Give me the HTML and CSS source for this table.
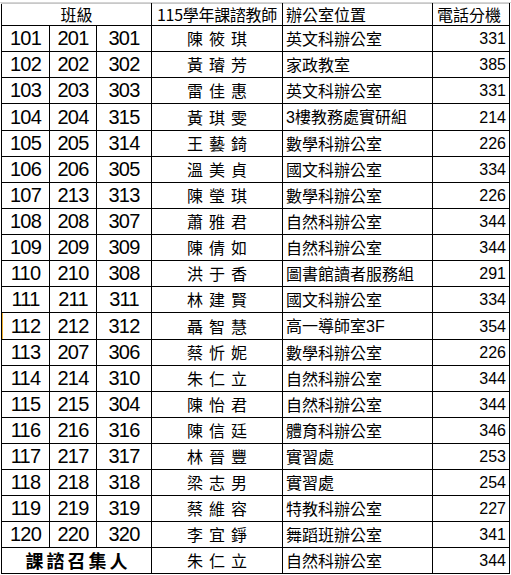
FILE: index.html
```html
<!DOCTYPE html>
<html lang="zh-Hant">
<head>
<meta charset="utf-8">
<link rel="stylesheet" href="styles.css">
</head>
<body>
<div class="sheet">
<table class="grid">
<colgroup>
<col class="c1"><col class="c2"><col class="c3"><col class="c4"><col class="c5"><col class="c6">
</colgroup>
<thead>
<tr class="head">
<th colspan="3" class="h-class">班級</th>
<th class="h-teacher">115學年課諮教師</th>
<th class="h-office">辦公室位置</th>
<th class="h-phone">電話分機</th>
</tr>
</thead>
<tbody>
<tr><td class="num">101</td><td class="num">201</td><td class="num">301</td><td class="name">陳筱琪</td><td class="office">英文科辦公室</td><td class="phone">331</td></tr>
<tr><td class="num">102</td><td class="num">202</td><td class="num">302</td><td class="name">黃璿芳</td><td class="office">家政教室</td><td class="phone">385</td></tr>
<tr><td class="num">103</td><td class="num">203</td><td class="num">303</td><td class="name">雷佳惠</td><td class="office">英文科辦公室</td><td class="phone">331</td></tr>
<tr><td class="num">104</td><td class="num">204</td><td class="num">315</td><td class="name">黃琪雯</td><td class="office"><span class="lat">3</span>樓教務處實研組</td><td class="phone">214</td></tr>
<tr><td class="num">105</td><td class="num">205</td><td class="num">314</td><td class="name">王藝錡</td><td class="office">數學科辦公室</td><td class="phone">226</td></tr>
<tr><td class="num">106</td><td class="num">206</td><td class="num">305</td><td class="name">溫美貞</td><td class="office">國文科辦公室</td><td class="phone">334</td></tr>
<tr><td class="num">107</td><td class="num">213</td><td class="num">313</td><td class="name">陳瑩琪</td><td class="office">數學科辦公室</td><td class="phone">226</td></tr>
<tr><td class="num">108</td><td class="num">208</td><td class="num">307</td><td class="name">蕭雅君</td><td class="office">自然科辦公室</td><td class="phone">344</td></tr>
<tr><td class="num">109</td><td class="num">209</td><td class="num">309</td><td class="name">陳倩如</td><td class="office">自然科辦公室</td><td class="phone">344</td></tr>
<tr><td class="num">110</td><td class="num">210</td><td class="num">308</td><td class="name">洪于香</td><td class="office">圖書館讀者服務組</td><td class="phone">291</td></tr>
<tr><td class="num">111</td><td class="num">211</td><td class="num">311</td><td class="name">林建賢</td><td class="office">國文科辦公室</td><td class="phone">334</td></tr>
<tr class="marked"><td class="num">112</td><td class="num">212</td><td class="num">312</td><td class="name">聶智慧</td><td class="office">高一導師室<span class="lat">3F</span></td><td class="phone">354</td></tr>
<tr><td class="num">113</td><td class="num">207</td><td class="num">306</td><td class="name">蔡忻妮</td><td class="office">數學科辦公室</td><td class="phone">226</td></tr>
<tr><td class="num">114</td><td class="num">214</td><td class="num">310</td><td class="name">朱仁立</td><td class="office">自然科辦公室</td><td class="phone">344</td></tr>
<tr><td class="num">115</td><td class="num">215</td><td class="num">304</td><td class="name">陳怡君</td><td class="office">自然科辦公室</td><td class="phone">344</td></tr>
<tr><td class="num">116</td><td class="num">216</td><td class="num">316</td><td class="name">陳信廷</td><td class="office">體育科辦公室</td><td class="phone">346</td></tr>
<tr><td class="num">117</td><td class="num">217</td><td class="num">317</td><td class="name">林晉豐</td><td class="office">實習處</td><td class="phone">253</td></tr>
<tr><td class="num">118</td><td class="num">218</td><td class="num">318</td><td class="name">梁志男</td><td class="office">實習處</td><td class="phone">254</td></tr>
<tr><td class="num">119</td><td class="num">219</td><td class="num">319</td><td class="name">蔡維容</td><td class="office">特教科辦公室</td><td class="phone">227</td></tr>
<tr><td class="num">120</td><td class="num">220</td><td class="num">320</td><td class="name">李宜錚</td><td class="office">舞蹈班辦公室</td><td class="phone">341</td></tr>
<tr class="foot"><td colspan="3" class="convener">課諮召集人</td><td class="name">朱仁立</td><td class="office">自然科辦公室</td><td class="phone">344</td></tr>
</tbody>
</table>
</div>
</body>
</html>
```
FILE: styles.css
```css
html, body {
  margin: 0;
  padding: 0;
  background: #fff;
}
.sheet {
  padding: 3px 0 0 1px;
  width: 511px;
  height: 575px;
  box-sizing: border-box;
  background:
    linear-gradient(#d4d4d4, #d4d4d4) 0 2px / 100% 1px no-repeat,
    #fff;
}
.grid {
  border-collapse: collapse;
  table-layout: fixed;
  width: 508px;
  font-family: "Noto Sans CJK TC", sans-serif;
  color: #000;
}
.c1 { width: 48px; }
.c2 { width: 47px; }
.c3 { width: 55px; }
.c4 { width: 131px; }
.c5 { width: 150px; }
.c6 { width: 77px; }
.grid th, .grid td {
  border: 1px solid #000;
  padding: 0;
  overflow: hidden;
  white-space: nowrap;
}
.head th {
  height: 21px;
  border-top-color: #c8c8c8;
  font-weight: normal;
  font-size: 16px;
  line-height: 21px;
  vertical-align: bottom;
}
.h-class { text-align: center; }
.h-teacher { text-align: center; font-size: 15px; letter-spacing: -0.3px; }
.h-office { text-align: left; padding-left: 3px !important; }
.h-phone { text-align: left; padding-left: 4px !important; }
.grid tbody td {
  height: 25px;
  line-height: 25px;
}
.num {
  font-family: "Liberation Sans", Arial, sans-serif;
  font-size: 20px;
  letter-spacing: -0.8px;
  text-align: center;
}
.name {
  text-align: center;
  font-size: 16px;
  letter-spacing: 6px;
  text-indent: 6px;
}
.office {
  font-size: 16px;
  padding-left: 3px !important;
  text-align: left;
}
.lat {
  font-family: "Liberation Sans", Arial, sans-serif;
}
.phone {
  font-family: "Liberation Sans", Arial, sans-serif;
  font-size: 16px;
  text-align: right;
  padding-right: 3px !important;
}
.convener {
  text-align: center;
  font-size: 18px;
  font-weight: bold;
  letter-spacing: 3px;
  text-indent: 3px;
}
.marked td:first-child {
  box-shadow: inset 1px 0 0 #f0b030;
}
```
